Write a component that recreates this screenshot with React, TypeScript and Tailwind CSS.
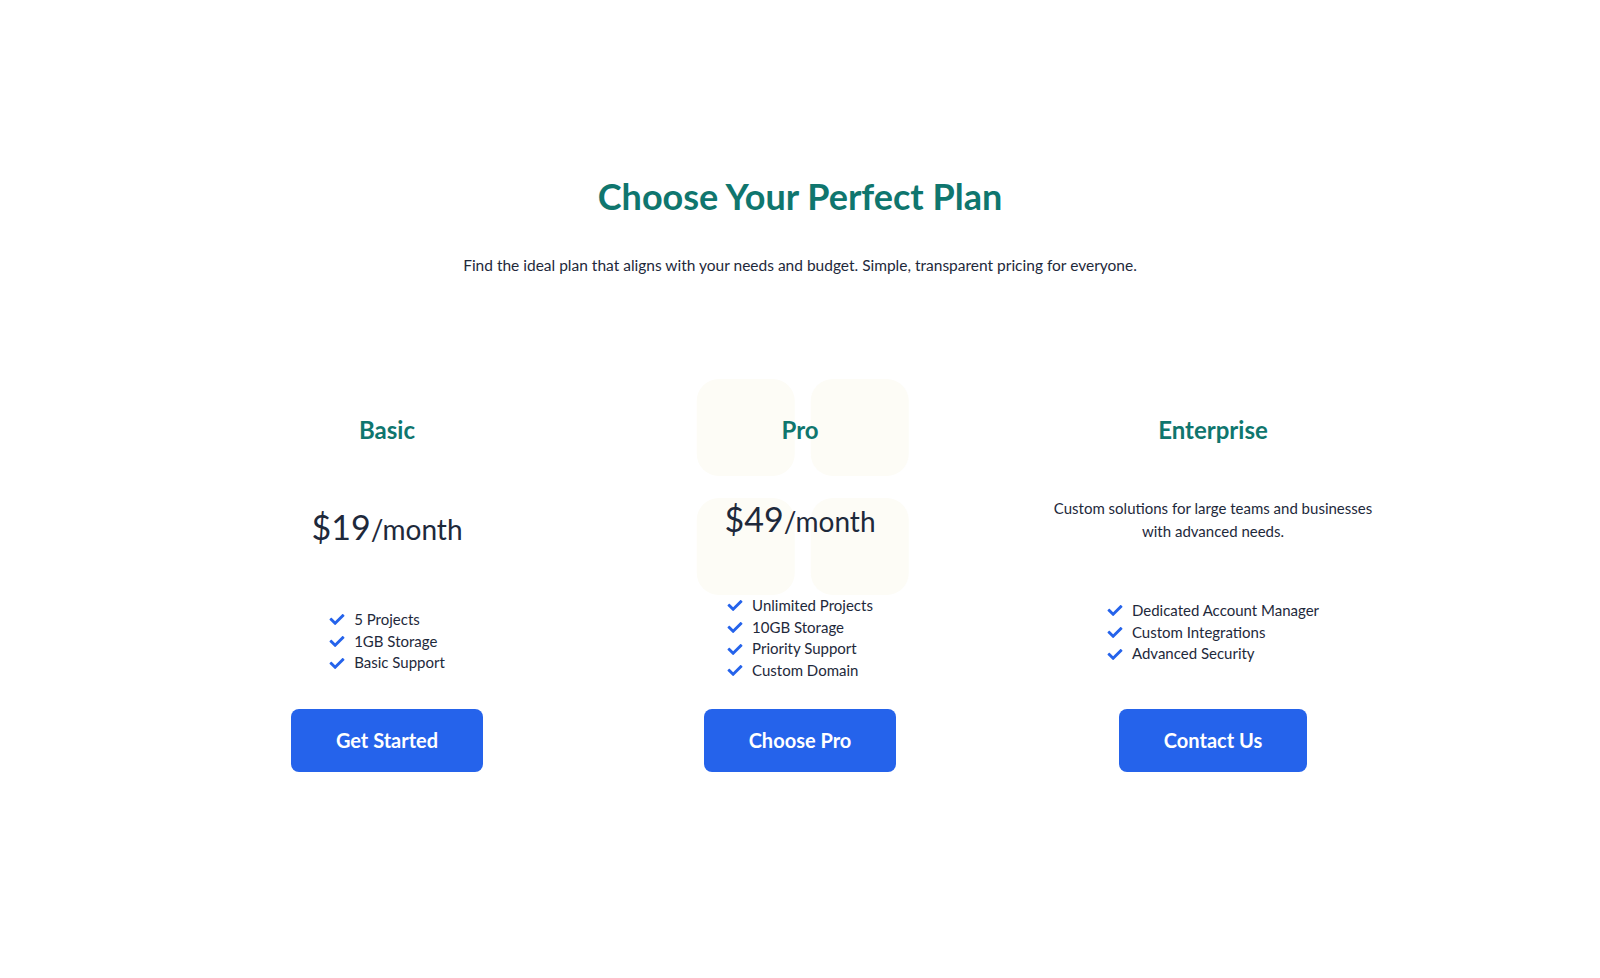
import { FaCheck } from 'react-icons/fa'

const font = { fontFamily: 'Lato, "Noto Sans", sans-serif' }

interface Plan {
  name: string
  price?: string
  description?: string
  features: string[]
  cta: string
  midClass: string
  listClass: string
  buttonClass: string
  decorated?: boolean
}

const plans: Plan[] = [
  {
    name: 'Basic',
    price: '$19',
    features: ['5 Projects', '1GB Storage', 'Basic Support'],
    cta: 'Get Started',
    midClass: 'mt-[61px]',
    listClass: 'mt-[60px]',
    buttonClass: 'mt-[35px]',
  },
  {
    name: 'Pro',
    price: '$49',
    features: ['Unlimited Projects', '10GB Storage', 'Priority Support', 'Custom Domain'],
    cta: 'Choose Pro',
    midClass: 'mt-[53px]',
    listClass: 'mt-[54px]',
    buttonClass: 'mt-[27px]',
    decorated: true,
  },
  {
    name: 'Enterprise',
    description: 'Custom solutions for large teams and businesses with advanced needs.',
    features: ['Dedicated Account Manager', 'Custom Integrations', 'Advanced Security'],
    cta: 'Contact Us',
    midClass: 'mt-[51px]',
    listClass: 'mt-[58px]',
    buttonClass: 'mt-[44px]',
  },
]

function Blobs() {
  return (
    <div className="pointer-events-none absolute left-1/2 top-[-35px] grid -translate-x-1/2 grid-cols-2 gap-[22px]">
      <div className="h-[97px] w-[98px] rounded-[22px] bg-[#fdfcf6]" />
      <div className="h-[97px] w-[98px] rounded-[22px] bg-[#fdfcf6]" />
      <div className="h-[97px] w-[98px] rounded-[22px] bg-[#fdfcf6]" />
      <div className="h-[97px] w-[98px] rounded-[22px] bg-[#fdfcf6]" />
    </div>
  )
}

function PlanCard({ plan }: { plan: Plan }) {
  return (
    <div className="relative flex flex-col items-center">
      {plan.decorated && <Blobs />}
      <h3 className="relative text-2xl font-bold text-[#0f766e]">{plan.name}</h3>
      {plan.price ? (
        <p className={`relative text-[#1e293b] ${plan.midClass}`}>
          <span className="text-[34px] leading-10">{plan.price}</span>
          <span className="text-[28px] leading-10">/month</span>
        </p>
      ) : (
        <p className={`relative w-[340px] text-center text-[15px] leading-[22.5px] text-[#1e293b] ${plan.midClass}`}>
          {plan.description}
        </p>
      )}
      <ul className={`relative flex flex-col ${plan.listClass}`}>
        {plan.features.map((f) => (
          <li key={f} className="flex items-center gap-[9px] text-[15px] leading-[21.7px] text-[#1e293b]">
            <FaCheck className="h-[15px] w-[16px] text-[#2563eb]" />
            {f}
          </li>
        ))}
      </ul>
      <button
        className={`rounded-lg bg-[#2563eb] px-[45px] py-[17px] text-xl leading-[29px] font-bold text-white ${plan.buttonClass}`}
      >
        {plan.cta}
      </button>
    </div>
  )
}

export default function App() {
  return (
    <div className="min-h-[978px] bg-white" style={font}>
      <section className="pt-[176px]">
        <h1 className="text-center text-[36px] leading-10 font-bold text-[#0f766e]">Choose Your Perfect Plan</h1>
        <p className="mt-[37px] text-center text-[15.5px] leading-6 text-[#1e293b]">
          Find the ideal plan that aligns with your needs and budget. Simple, transparent pricing for everyone.
        </p>
        <div className="mx-auto mt-[137px] grid w-[1239px] grid-cols-3">
          {plans.map((p) => (
            <PlanCard key={p.name} plan={p} />
          ))}
        </div>
      </section>
    </div>
  )
}
